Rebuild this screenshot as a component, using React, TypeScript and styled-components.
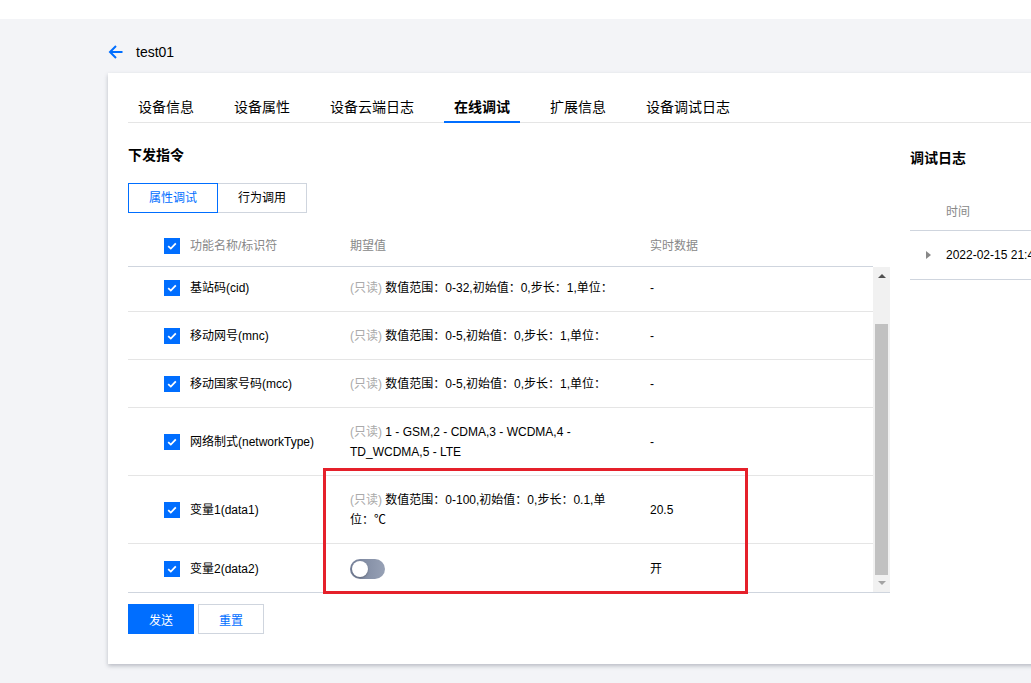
import React, { useLayoutEffect, useRef } from 'react';
import styled, { createGlobalStyle } from 'styled-components';

const GlobalStyle = createGlobalStyle`
  html, body {
    margin: 0;
    padding: 0;
    overflow: hidden;
  }
  body {
    width: 1031px;
    height: 683px;
    background: #f3f4f7;
    font-family: "Liberation Sans", "Noto Sans CJK SC", sans-serif;
    color: #000;
  }
  * { box-sizing: border-box; }
`;

const BLUE = '#006eff';

const TopBar = styled.div`
  height: 19px;
  background: #fff;
`;

const Main = styled.main`
  padding-left: 108px;
`;

const TitleRow = styled.div`
  display: flex;
  align-items: center;
  gap: 12px;
  height: 30px;
  margin-top: 18px;
  font-size: 14px;
`;

const BackIcon = styled.svg`
  display: block;
  flex-shrink: 0;
`;

const Card = styled.section`
  width: 1180px;
  margin-top: 6px;
  background: #fff;
  box-shadow: 0 2px 4px rgba(54, 58, 80, 0.3);
  padding: 24px 20px 30px;
`;

const TabBar = styled.nav`
  display: flex;
  border-bottom: 1px solid #e5e5e5;
`;

const Tab = styled.div<{ $active?: boolean }>`
  padding: 0 10px 4px;
  margin-right: 20px;
  margin-bottom: -1px;
  font-size: 14px;
  line-height: 20px;
  color: #000;
  font-weight: ${(p) => (p.$active ? 700 : 400)};
  border-bottom: 2px solid ${(p) => (p.$active ? BLUE : 'transparent')};
`;

const Content = styled.div`
  display: flex;
  gap: 20px;
`;

const LeftPanel = styled.div`
  position: relative;
  width: 762px;
  flex-shrink: 0;
`;

const RightPanel = styled.div`
  flex: 1;
`;

const SectionTitle = styled.h3<{ $top: number }>`
  margin: ${(p) => p.$top}px 0 0;
  font-size: 14px;
  line-height: 20px;
  font-weight: 700;
`;

const Segmented = styled.div`
  display: flex;
  margin-top: 18px;
`;

const SegButton = styled.button<{ $active?: boolean }>`
  position: relative;
  z-index: ${(p) => (p.$active ? 1 : 0)};
  width: 90px;
  height: 30px;
  margin-left: -1px;
  padding: 0;
  font-family: inherit;
  font-size: 12px;
  line-height: 28px;
  background: #fff;
  color: ${(p) => (p.$active ? BLUE : '#000')};
  border: 1px solid ${(p) => (p.$active ? BLUE : '#cfd5de')};
  &:first-child {
    margin-left: 0;
  }
`;

const Table = styled.div`
  margin-top: 13px;
`;

const GridRow = styled.div`
  display: grid;
  grid-template-columns: 202px 300px 1fr;
  align-items: center;
`;

const HeadRow = styled(GridRow)`
  height: 41px;
  margin-right: 17px;
  border-bottom: 1px solid #cfd5de;
  color: #888;
  font-size: 12px;
`;

const HeadCell = styled.div<{ $first?: boolean }>`
  display: flex;
  align-items: center;
  gap: 10px;
  padding: 0 20px 0 ${(p) => (p.$first ? 36 : 20)}px;
  line-height: 20px;
`;

const BodyFrame = styled.div`
  display: flex;
  height: 326px;
  border-bottom: 1px solid #cfd5de;
`;

const BodyViewport = styled.div`
  flex: 1;
  min-width: 0;
  overflow: hidden;
`;

const ScrollBar = styled.div`
  width: 17px;
  flex-shrink: 0;
  display: flex;
  flex-direction: column;
  background: #f1f1f1;
`;

const ScrollArrow = styled.div`
  height: 17px;
  display: flex;
  align-items: center;
  justify-content: center;
`;

const ArrowTri = styled.span<{ $dir: 'up' | 'down' }>`
  width: 0;
  height: 0;
  border-left: 4px solid transparent;
  border-right: 4px solid transparent;
  ${(p) =>
    p.$dir === 'up'
      ? 'border-bottom: 4px solid #505050; margin-top: 1px;'
      : 'border-top: 4px solid #a3a3a3; margin-bottom: 1px;'}
`;

const ScrollTrack = styled.div`
  flex: 1;
  display: flex;
  flex-direction: column;
  padding-top: 40px;
`;

const ScrollThumb = styled.div`
  flex: 1;
  margin: 0 2px;
  background: #c1c1c1;
`;

const BodyRow = styled(GridRow)`
  min-height: 48px;
  border-bottom: 1px solid #e5e5e5;
  font-size: 12px;
  &:last-child {
    border-bottom: 0;
  }
`;

const Cell = styled.div<{ $first?: boolean }>`
  display: flex;
  align-items: center;
  gap: 10px;
  padding: 14px 20px 13px ${(p) => (p.$first ? 36 : 20)}px;
  line-height: 20px;
  white-space: nowrap;
`;

const TextCell = styled.div`
  padding: 14px 10px 13px 20px;
  line-height: 20px;
`;

const ReadOnly = styled.span`
  color: #aaa;
`;

const CheckBox = styled.span`
  display: inline-flex;
  align-items: center;
  justify-content: center;
  width: 16px;
  height: 16px;
  flex-shrink: 0;
  background: ${BLUE};
`;

const Switch = styled.span`
  position: relative;
  display: block;
  width: 35px;
  height: 20px;
  border-radius: 10px;
  background: linear-gradient(to right, #76819a, #97a1b5);
`;

const Knob = styled.span`
  position: absolute;
  left: 2px;
  top: 2px;
  width: 16px;
  height: 16px;
  border-radius: 50%;
  background: #fff;
  box-shadow: 0 1px 2px rgba(0, 0, 0, 0.25);
`;

const Footer = styled.div`
  display: flex;
  gap: 4px;
  margin-top: 11px;
`;

const Btn = styled.button<{ $primary?: boolean }>`
  height: 30px;
  min-width: 66px;
  padding: 0 20px;
  font-family: inherit;
  font-size: 12px;
  background: ${(p) => (p.$primary ? BLUE : '#fff')};
  color: ${(p) => (p.$primary ? '#fff' : BLUE)};
  border: 1px solid ${(p) => (p.$primary ? BLUE : '#cfd5de')};
`;

const Annotation = styled.div`
  position: absolute;
  left: 195px;
  top: 345px;
  width: 425px;
  height: 126px;
  border: 3px solid #e5202a;
  pointer-events: none;
`;

const LogHead = styled.div`
  margin-top: 22px;
  height: 41px;
  display: flex;
  align-items: center;
  padding-left: 36px;
  border-bottom: 1px solid #cfd5de;
  color: #888;
  font-size: 12px;
`;

const LogRow = styled.div`
  height: 49px;
  display: flex;
  align-items: center;
  border-bottom: 1px solid #cfd5de;
  font-size: 12px;
  white-space: nowrap;
`;

const ExpandCell = styled.div`
  width: 36px;
  display: flex;
  justify-content: center;
`;

const Caret = styled.span`
  width: 0;
  height: 0;
  border-top: 4px solid transparent;
  border-bottom: 4px solid transparent;
  border-left: 5px solid #888;
`;

type Row = {
  name: string;
  desc?: string;
  toggle?: boolean;
  value: string;
};

const rows: Row[] = [
  { name: '位置区域码(lac)', desc: '数值范围：0-65535,初始值：0,步长：1', value: '-' },
  { name: '基站码(cid)', desc: '数值范围：0-32,初始值：0,步长：1,单位：', value: '-' },
  { name: '移动网号(mnc)', desc: '数值范围：0-5,初始值：0,步长：1,单位：', value: '-' },
  { name: '移动国家号码(mcc)', desc: '数值范围：0-5,初始值：0,步长：1,单位：', value: '-' },
  { name: '网络制式(networkType)', desc: '1 - GSM,2 - CDMA,3 - WCDMA,4 - TD_WCDMA,5 - LTE', value: '-' },
  { name: '变量1(data1)', desc: '数值范围：0-100,初始值：0,步长：0.1,单位：℃', value: '20.5' },
  { name: '变量2(data2)', toggle: true, value: '开' },
];

const tabs = ['设备信息', '设备属性', '设备云端日志', '在线调试', '扩展信息', '设备调试日志'];

const Check = () => (
  <CheckBox>
    <svg width="10" height="8" viewBox="0 0 10 8">
      <path d="M1.2 4.2 L3.8 6.6 L8.8 1.4" stroke="#fff" strokeWidth="1.8" fill="none" />
    </svg>
  </CheckBox>
);

export default function App() {
  const viewportRef = useRef<HTMLDivElement>(null);
  useLayoutEffect(() => {
    const el = viewportRef.current;
    if (el) el.scrollTop = el.scrollHeight;
  }, []);

  return (
    <>
      <GlobalStyle />
      <TopBar />
      <Main>
        <TitleRow>
          <BackIcon width="16" height="16" viewBox="0 0 16 16">
            <path d="M14.5 8 H2 M8 2 L2 8 L8 14" stroke={BLUE} strokeWidth="2" fill="none" />
          </BackIcon>
          <span>test01</span>
        </TitleRow>
        <Card>
          <TabBar>
            {tabs.map((t) => (
              <Tab key={t} $active={t === '在线调试'}>
                {t}
              </Tab>
            ))}
          </TabBar>
          <Content>
            <LeftPanel>
              <SectionTitle $top={22}>下发指令</SectionTitle>
              <Segmented>
                <SegButton $active>属性调试</SegButton>
                <SegButton>行为调用</SegButton>
              </Segmented>
              <Table>
                <HeadRow>
                  <HeadCell $first>
                    <Check />
                    <span>功能名称/标识符</span>
                  </HeadCell>
                  <HeadCell>期望值</HeadCell>
                  <HeadCell>实时数据</HeadCell>
                </HeadRow>
                <BodyFrame>
                  <BodyViewport ref={viewportRef}>
                    {rows.map((r) => (
                      <BodyRow key={r.name}>
                        <Cell $first>
                          <Check />
                          <span>{r.name}</span>
                        </Cell>
                        {r.toggle ? (
                          <Cell>
                            <Switch>
                              <Knob />
                            </Switch>
                          </Cell>
                        ) : (
                          <TextCell>
                            <ReadOnly>(只读)</ReadOnly> {r.desc}
                          </TextCell>
                        )}
                        <TextCell>{r.value}</TextCell>
                      </BodyRow>
                    ))}
                  </BodyViewport>
                  <ScrollBar>
                    <ScrollArrow>
                      <ArrowTri $dir="up" />
                    </ScrollArrow>
                    <ScrollTrack>
                      <ScrollThumb />
                    </ScrollTrack>
                    <ScrollArrow>
                      <ArrowTri $dir="down" />
                    </ScrollArrow>
                  </ScrollBar>
                </BodyFrame>
              </Table>
              <Footer>
                <Btn $primary>发送</Btn>
                <Btn>重置</Btn>
              </Footer>
              <Annotation />
            </LeftPanel>
            <RightPanel>
              <SectionTitle $top={25}>调试日志</SectionTitle>
              <LogHead>时间</LogHead>
              <LogRow>
                <ExpandCell>
                  <Caret />
                </ExpandCell>
                <span>2022-02-15 21:47:32</span>
              </LogRow>
            </RightPanel>
          </Content>
        </Card>
      </Main>
    </>
  );
}
